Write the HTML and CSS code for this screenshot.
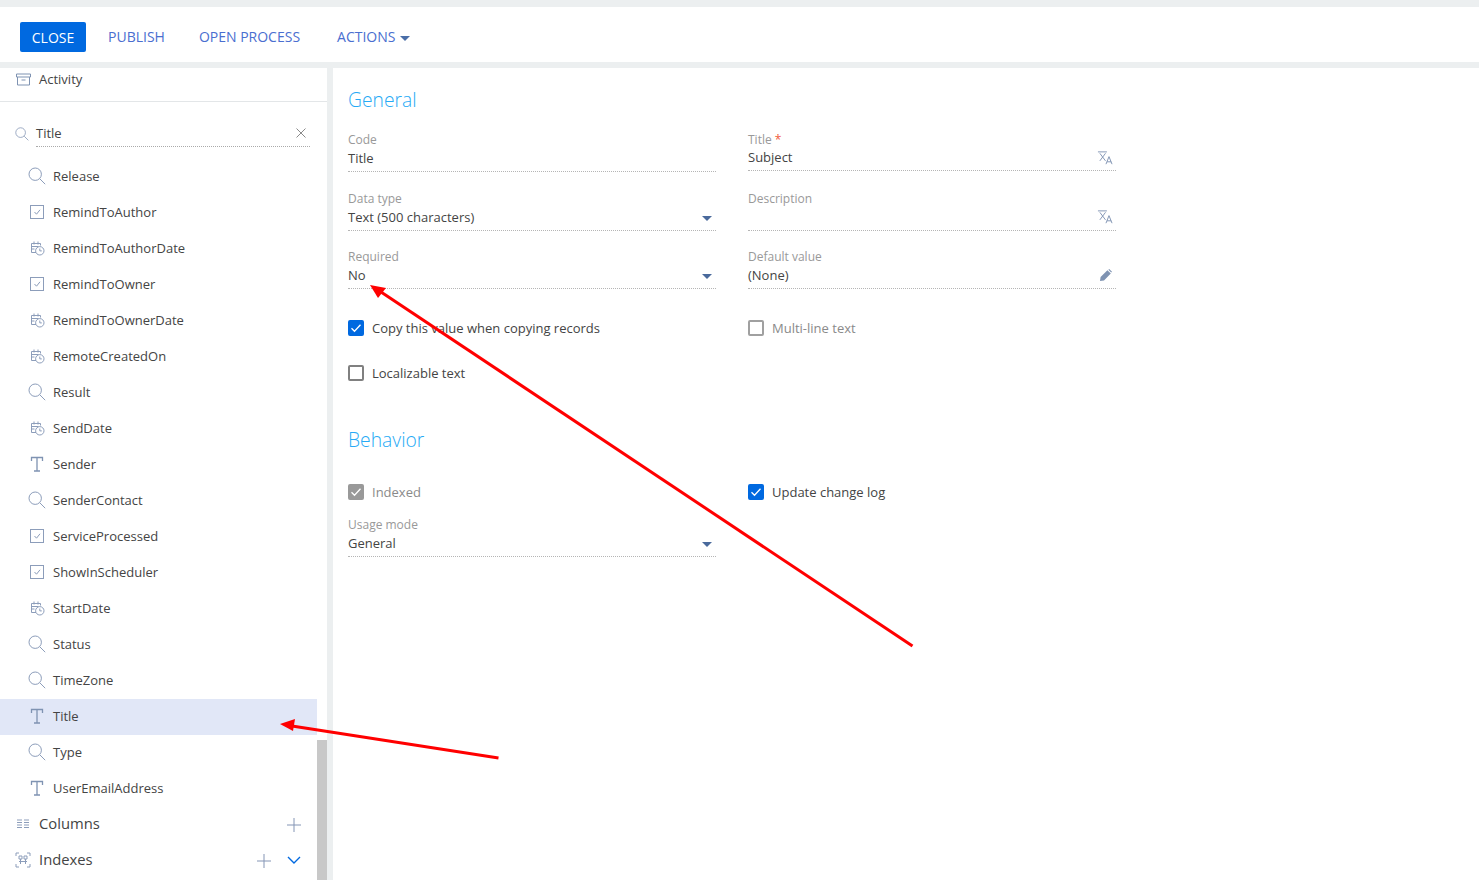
FILE: index.html
```html
<!DOCTYPE html>
<html lang="en">
<head>
<meta charset="UTF-8">
<title>Column setup</title>
<link rel="stylesheet" href="styles.css">
</head>
<body>
<svg class="defs" width="0" height="0">
    <symbol id="i-search" viewBox="0 0 18 18"><circle cx="7.2" cy="7.2" r="6.2"/><path d="M11.8 11.8l5.4 5.4"/></symbol>
    <symbol id="i-bool" viewBox="0 0 18 18"><rect x="2.5" y="2.5" width="13" height="13"/><path d="M6.5 9l2 2.2 3.5-4.4"/></symbol>
    <symbol id="i-date" viewBox="0 0 18 18"><path d="M8 13.500H3.500V4.500h9v2M3.500 7.500h7M6 2.500v3M10 2.500v3M3.500 10h3"/><circle cx="11.800" cy="11.800" r="4.200"/><path d="M11.800 9.500v2.400h2"/></symbol>
    <symbol id="i-text" viewBox="0 0 18 18"><path class="t-bar" d="M3.500 6V2.500h11V6M9 2.500V16M6 16h6"/></symbol>
    <symbol id="i-trans" viewBox="0 0 18 18"><path d="M1 2h9.500M3 3.500l6 8M9 3.500l-6 8M9.500 15l3.200-8 3.200 8M10.600 12.500h4.400"/></symbol>
</svg>

<div class="toolbar">
    <button class="btn-close">CLOSE</button>
    <a class="tool-link" href="#">PUBLISH</a>
    <a class="tool-link" href="#">OPEN PROCESS</a>
    <a class="tool-link tool-actions" href="#">ACTIONS<i class="caret"></i></a>
</div>

<div class="workspace">
    <div class="side">
        <div class="side-head">
            <svg class="ico-box" viewBox="0 0 16 13"><path d="M1 1h14v3H1zM2 4v8h12V4M6 7h4"/></svg>
            <span>Activity</span>
        </div>
        <div class="filter">
            <svg class="ico ico-filter"><use href="#i-search"/></svg>
            <div class="filter-input">
                <span>Title</span>
                <svg class="ico-x" viewBox="0 0 10 10"><path d="M.5.5l9 9M9.500.5l-9 9"/></svg>
            </div>
        </div>
        <ul class="cols">
            <li><svg class="ico"><use href="#i-search"/></svg>Release</li>
            <li><svg class="ico"><use href="#i-bool"/></svg>RemindToAuthor</li>
            <li><svg class="ico"><use href="#i-date"/></svg>RemindToAuthorDate</li>
            <li><svg class="ico"><use href="#i-bool"/></svg>RemindToOwner</li>
            <li><svg class="ico"><use href="#i-date"/></svg>RemindToOwnerDate</li>
            <li><svg class="ico"><use href="#i-date"/></svg>RemoteCreatedOn</li>
            <li><svg class="ico"><use href="#i-search"/></svg>Result</li>
            <li><svg class="ico"><use href="#i-date"/></svg>SendDate</li>
            <li><svg class="ico"><use href="#i-text"/></svg>Sender</li>
            <li><svg class="ico"><use href="#i-search"/></svg>SenderContact</li>
            <li><svg class="ico"><use href="#i-bool"/></svg>ServiceProcessed</li>
            <li><svg class="ico"><use href="#i-bool"/></svg>ShowInScheduler</li>
            <li><svg class="ico"><use href="#i-date"/></svg>StartDate</li>
            <li><svg class="ico"><use href="#i-search"/></svg>Status</li>
            <li><svg class="ico"><use href="#i-search"/></svg>TimeZone</li>
            <li class="active"><svg class="ico"><use href="#i-text"/></svg>Title</li>
            <li><svg class="ico"><use href="#i-search"/></svg>Type</li>
            <li><svg class="ico"><use href="#i-text"/></svg>UserEmailAddress</li>
        </ul>
        <div class="group">
            <svg class="ico-group" viewBox="0 0 14 10"><path d="M1 1h5M1 3.500h5M1 6h5M1 8.500h5M8 1h5M8 3.500h5M8 6h5M8 8.500h5"/></svg>
            <span class="group-name">Columns</span>
            <svg class="ico-plus" viewBox="0 0 14 14"><path d="M7 0v14M0 7h14"/></svg>
        </div>
        <div class="group">
            <svg class="ico-group ico-index" viewBox="0 0 16 16"><path d="M1 4V1h3M12 1h3v3M15 12v3h-3M4 15H1v-3M4 4h3v3H4zM9 4h3v3H9zM5.500 7v5M10.500 7v5M4 9.500h8"/></svg>
            <span class="group-name">Indexes</span>
            <svg class="ico-plus" viewBox="0 0 14 14"><path d="M7 0v14M0 7h14"/></svg>
            <svg class="ico-chevron" viewBox="0 0 14 8"><path d="M1 1l6 6 6-6"/></svg>
        </div>
        <div class="scrollbar"></div>
    </div>

    <div class="main">
        <h2>General</h2>
        <div class="form">
            <div class="field">
                <label>Code</label>
                <div class="value">Title</div>
            </div>
            <div class="field field-up">
                <label>Title <b>*</b></label>
                <div class="value">Subject<svg class="ico-trans"><use href="#i-trans"/></svg></div>
            </div>
            <div class="field">
                <label>Data type</label>
                <div class="value">Text (500 characters)<i class="select"></i></div>
            </div>
            <div class="field field-up">
                <label>Description</label>
                <div class="value"><svg class="ico-trans"><use href="#i-trans"/></svg></div>
            </div>
            <div class="field">
                <label>Required</label>
                <div class="value">No<i class="select"></i></div>
            </div>
            <div class="field">
                <label>Default value</label>
                <div class="value">(None)<svg class="ico-pen" viewBox="0 0 12 12"><path d="M0 12l.6-4L7.400 1.200l3.400 3.400L4 11.400zM8.400.8L9.200 0 12 2.800l-.8.800z"/></svg></div>
            </div>
        </div>
        <div class="checks">
            <div class="check on"><i class="box"><svg viewBox="0 0 16 16"><path d="M3.500 8.200l3 3L12.500 4.800"/></svg></i>Copy this value when copying records</div>
            <div class="check muted"><i class="box"></i>Multi-line text</div>
            <div class="check"><i class="box"></i>Localizable text</div>
        </div>

        <h2 class="h-behavior">Behavior</h2>
        <div class="checks checks-behavior">
            <div class="check locked"><i class="box"><svg viewBox="0 0 16 16"><path d="M3.500 8.200l3 3L12.500 4.800"/></svg></i>Indexed</div>
            <div class="check on"><i class="box"><svg viewBox="0 0 16 16"><path d="M3.500 8.200l3 3L12.500 4.800"/></svg></i>Update change log</div>
        </div>
        <div class="form form-behavior">
            <div class="field">
                <label>Usage mode</label>
                <div class="value">General<i class="select"></i></div>
            </div>
        </div>
    </div>
</div>

<!-- annotation arrows drawn over the page -->
<svg class="arrows" viewBox="0 0 1479 880">
    <path d="M912.500 646L378 290"/>
    <polygon points="370,285 386,288 378,298"/>
    <path d="M498.500 758L292 726"/>
    <polygon points="280,724 295,719 293,731"/>
</svg>
</body>
</html>
```

FILE: styles.css
```css
* {
    box-sizing: border-box;
}
html,
body {
    height: 100%;
}
body {
    margin: 0;
    overflow: hidden;
    background: #eceff0;
    color: #444;
    font: 13px/20px "Open Sans", "Liberation Sans", sans-serif;
}
.defs {
    position: absolute;
}
ul {
    margin: 0;
    padding: 0;
    list-style: none;
}

/* toolbar */
.toolbar {
    display: flex;
    align-items: center;
    height: 55px;
    margin: 7px 0 6px;
    padding: 5px 0 0 20px;
    background: #fff;
    font-size: 14px;
}
.btn-close {
    width: 66px;
    height: 30px;
    margin-right: 22px;
    padding: 0;
    border: 0;
    border-radius: 2px;
    background: #0069e0;
    color: #fff;
    font: 14px "Open Sans", sans-serif;
}
.tool-link {
    margin-right: 34px;
    color: #4a6ed0;
    text-decoration: none;
}
.tool-actions {
    margin-left: 3px;
}
.caret {
    display: inline-block;
    margin-left: 5px;
    vertical-align: middle;
    border: 5px solid transparent;
    border-top-color: #4a6ea8;
    border-bottom: 0;
}

.workspace {
    display: flex;
    height: 812px;
}

/* left column */
.side {
    position: relative;
    flex: none;
    width: 327px;
    overflow: hidden;
    background: #fff;
}
.side-head {
    display: flex;
    align-items: center;
    height: 34px;
    padding: 0 0 11px 15px;
    border-bottom: 1px solid #e3e6e8;
}
.ico-box {
    width: 17px;
    height: 13px;
    margin-right: 7px;
    fill: none;
    stroke: #7f93b2;
}
.filter {
    display: flex;
    align-items: center;
    margin: 21px 17px 0 15px;
    height: 24px;
}
.ico {
    flex: none;
    width: 18px;
    height: 18px;
    fill: none;
    stroke: #8c9dba;
}
.ico-filter {
    width: 14px;
    height: 14px;
    margin: -3px 7px 0 0;
    stroke: #8496b4;
}
.filter-input {
    display: flex;
    flex: 1;
    align-items: center;
    justify-content: space-between;
    height: 24px;
    padding: 0 4px 3px 0;
    border-bottom: 1px dotted #aaa;
}
.ico-x {
    width: 10px;
    height: 10px;
    fill: none;
    stroke: #8a8a8a;
}
.cols {
    width: 317px;
    margin: 12px 0 -1px;
}
.cols li {
    display: flex;
    align-items: center;
    height: 36px;
    padding: 0 0 2px 28px;
}
.cols .ico {
    margin-right: 7px;
    margin-top: -1px;
}
.cols .active {
    background: #e1e7f7;
}
.t-bar {
    stroke: #7f93b2;
    stroke-width: 1.300;
}
.group {
    display: flex;
    align-items: center;
    width: 317px;
    height: 36px;
    padding: 0 16px;
}
.group-name {
    flex: 1;
    margin: -2px 0 0 -1px;
    font-size: 14.800px;
}
.ico-group {
    flex: none;
    width: 14px;
    height: 10px;
    margin-right: 10px;
    fill: none;
    stroke: #8c9dba;
}
.ico-index {
    width: 16px;
    height: 16px;
    margin-left: -1px;
    margin-right: 9px;
}
.ico-plus {
    width: 14px;
    height: 14px;
    margin-top: 2px;
    fill: none;
    stroke: #8495b5;
}
.ico-chevron {
    width: 14px;
    height: 8px;
    margin-left: 16px;
    fill: none;
    stroke: #0069e0;
    stroke-width: 1.400;
}
.scrollbar {
    position: absolute;
    top: 672px;
    right: 0;
    bottom: 0;
    width: 10px;
    background: #c8c8c8;
}

/* right part */
.main {
    flex: 1;
    margin-left: 6px;
    padding: 20px 0 0 15px;
    background: #fff;
}
h2 {
    margin: 0;
    color: #27aaf5;
    font: 300 19.300px/24px "Open Sans", sans-serif;
}
.form {
    display: grid;
    grid-template-columns: 368px 368px;
    column-gap: 32px;
    row-gap: 18px;
    margin-top: 20px;
}
.field {
    position: relative;
    height: 40px;
    border-bottom: 1px dotted #b5b5b5;
}
.field:nth-child(-n+2) {
    margin-bottom: 1px;
}
.field-up {
    height: 39px;
}
.field-up:nth-child(4) {
    height: 40px;
    margin-top: 0;
}
.field-up .value {
    line-height: 18px;
}
.field label {
    display: block;
    color: #999;
    font-size: 12px;
    line-height: 15px;
}
.field label b {
    color: #f05a3c;
    font-weight: 400;
}
.value {
    position: relative;
    height: 20px;
    margin-top: 1px;
}
.select {
    position: absolute;
    right: 4px;
    top: 9px;
    border: 5px solid transparent;
    border-top-color: #4a6a9c;
    border-bottom: 0;
}
.ico-trans {
    position: absolute;
    right: 2px;
    top: 2px;
    width: 17px;
    height: 17px;
    fill: none;
    stroke: #7f93b2;
}
.ico-pen {
    position: absolute;
    right: 4px;
    top: 4px;
    width: 12px;
    height: 12px;
    fill: #7f93b2;
}
.checks {
    display: grid;
    grid-template-columns: 368px 368px;
    column-gap: 32px;
    row-gap: 25px;
    margin-top: 29px;
}
.check {
    display: flex;
    align-items: center;
    height: 20px;
}
.check .box {
    flex: none;
    width: 16px;
    height: 16px;
    margin-right: 8px;
    border: 2px solid #808080;
    border-radius: 2px;
}
.box svg {
    display: block;
    width: 16px;
    height: 16px;
    margin: -2px;
    fill: none;
    stroke: #fff;
    stroke-width: 1.300;
}
.check.on .box {
    border-color: #0069e0;
    background: #0069e0;
}
.check.locked {
    color: #8a8a8a;
}
.check.locked .box {
    border-color: #999;
    background: #999;
}
.check.muted {
    color: #8a8a8a;
}
.check.muted .box {
    border-color: #a0a0a0;
}
.h-behavior {
    margin-top: 45px;
}
.checks-behavior {
    margin-top: 30px;
}
.form-behavior {
    margin-top: 15px;
}

.arrows {
    position: absolute;
    left: 0;
    top: 0;
    width: 1479px;
    height: 880px;
    pointer-events: none;
}
.arrows path {
    fill: none;
    stroke: #f00;
    stroke-width: 3;
}
.arrows polygon {
    fill: #f00;
}
```
